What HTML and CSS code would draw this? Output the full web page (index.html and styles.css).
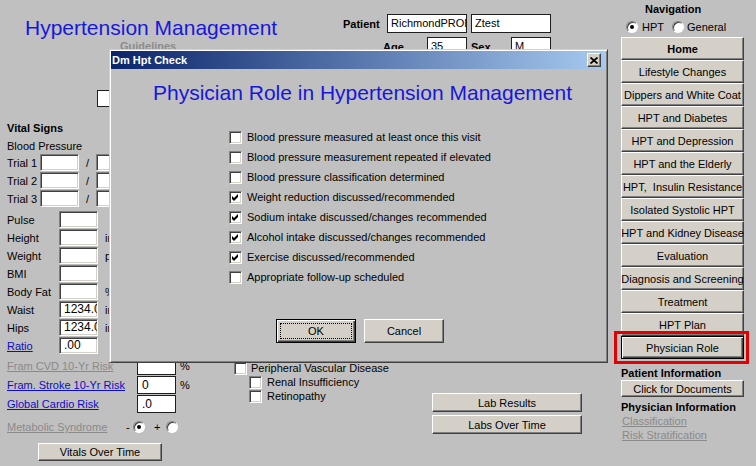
FILE: index.html
```html
<!DOCTYPE html>
<html lang="en">
<head>
<meta charset="utf-8">
<title>Hypertension Management</title>
<link rel="stylesheet" href="styles.css">
</head>
<body>
<div class="screen">
  <div class="main">
    <header class="top">
      <div class="titleblock">
        <h1 class="apptitle">Hypertension Management</h1>
        <div class="guide">Guidelines</div>
      </div>
      <div class="patient">
        <div class="prow">
          <span class="plabel">Patient</span>
          <span class="tbox w80">RichmondPROD</span>
          <span class="tbox w80 gapl">Ztest</span>
        </div>
        <div class="prow prow2">
          <span class="plabel">Age</span>
          <span class="tbox w40">35</span>
          <span class="plabel sex">Sex</span>
          <span class="tbox w40">M</span>
        </div>
      </div>
    </header>

    <section class="upper">
      <div class="searchbox"></div>
      <div class="sect bold">Vital Signs</div>
      <div class="sect sect2">Blood Pressure</div>
      <div class="trials">
        <div class="trow"><span class="tl">Trial 1</span><span class="field w39"></span><span class="slash">/</span><span class="field w39"></span></div>
        <div class="trow"><span class="tl">Trial 2</span><span class="field w39"></span><span class="slash">/</span><span class="field w39"></span></div>
        <div class="trow"><span class="tl">Trial 3</span><span class="field w39"></span><span class="slash">/</span><span class="field w39"></span></div>
      </div>
      <div class="vrows">
        <div class="vrow"><span class="vl">Pulse</span><span class="field w39"></span></div>
        <div class="vrow"><span class="vl">Height</span><span class="field w39"></span><span class="unit">in</span></div>
        <div class="vrow"><span class="vl">Weight</span><span class="field w39"></span><span class="unit">pounds</span></div>
        <div class="vrow"><span class="vl">BMI</span><span class="field w39"></span></div>
        <div class="vrow"><span class="vl">Body Fat</span><span class="field w39"></span><span class="unit">%</span></div>
        <div class="vrow"><span class="vl">Waist</span><span class="field w39"><span class="clipval">1234.0</span></span><span class="unit">in</span></div>
        <div class="vrow"><span class="vl">Hips</span><span class="field w39"><span class="clipval">1234.0</span></span><span class="unit">in</span></div>
        <div class="vrow"><span class="vl link">Ratio</span><span class="field w39">.00</span></div>
      </div>
    </section>

    <section class="lower">
      <div class="risk">
        <div class="rrow"><span class="rl glink">Fram CVD 10-Yr Risk</span><span class="rbox"></span><span class="pct">%</span></div>
        <div class="rrow"><span class="rl link">Fram. Stroke 10-Yr Risk</span><span class="rbox">0</span><span class="pct">%</span></div>
        <div class="rrow"><span class="rl link">Global Cardio Risk</span><span class="rbox">.0</span></div>
        <div class="meta">
          <span class="metal glink">Metabolic Syndrome</span>
          <span class="sign">-</span><span class="rad on"></span>
          <span class="sign plus">+</span><span class="rad"></span>
        </div>
        <button type="button" class="wbtn vbtn">Vitals Over Time</button>
      </div>
      <div class="conditions">
        <div class="crow"><span class="cb"></span><span>Peripheral Vascular Disease</span></div>
        <div class="crow sub"><span class="cb"></span><span>Renal Insufficiency</span></div>
        <div class="crow sub"><span class="cb"></span><span>Retinopathy</span></div>
      </div>
      <div class="labs">
        <button type="button" class="wbtn lbtn">Lab Results</button>
        <button type="button" class="wbtn lbtn">Labs Over Time</button>
      </div>
    </section>
  </div>

  <aside class="nav">
    <div class="navtitle">Navigation</div>
    <div class="navradios">
      <span class="rad on"></span><span class="rtext">HPT</span>
      <span class="rad rgap"></span><span class="rtext">General</span>
    </div>
    <div class="navbtns">
      <button type="button" class="wbtn nbtn bold">Home</button>
      <button type="button" class="wbtn nbtn">Lifestyle Changes</button>
      <button type="button" class="wbtn nbtn">Dippers and White Coat</button>
      <button type="button" class="wbtn nbtn">HPT and Diabetes</button>
      <button type="button" class="wbtn nbtn">HPT and Depression</button>
      <button type="button" class="wbtn nbtn">HPT and the Elderly</button>
      <button type="button" class="wbtn nbtn">HPT,&nbsp; Insulin Resistance</button>
      <button type="button" class="wbtn nbtn">Isolated Systolic HPT</button>
      <button type="button" class="wbtn nbtn">HPT and Kidney Disease</button>
      <button type="button" class="wbtn nbtn">Evaluation</button>
      <button type="button" class="wbtn nbtn">Diagnosis and Screening</button>
      <button type="button" class="wbtn nbtn">Treatment</button>
      <button type="button" class="wbtn nbtn">HPT Plan</button>
      <button type="button" class="wbtn nbtn defbtn">Physician Role</button>
    </div>
    <div class="ninfo">Patient Information</div>
    <button type="button" class="wbtn docbtn">Click for Documents</button>
    <div class="ninfo ninfo2">Physician Information</div>
    <div class="nlink glink">Classification</div>
    <div class="nlink glink">Risk Stratification</div>
  </aside>

  <div class="highlight"></div>

  <div class="dialog">
    <div class="titlebar">
      <span class="ttext">Dm Hpt Check</span>
      <span class="close"><svg width="8" height="7" viewBox="0 0 8 7"><path d="M0.5 0.5 L7.5 6.5 M7.5 0.5 L0.5 6.5" stroke="#000" stroke-width="1.7" fill="none"/></svg></span>
    </div>
    <h2 class="dhead">Physician Role in Hypertension Management</h2>
    <ul class="checklist">
      <li><span class="cb"></span><span>Blood pressure measured at least once this visit</span></li>
      <li><span class="cb"></span><span>Blood pressure measurement repeated if elevated</span></li>
      <li><span class="cb"></span><span>Blood pressure classification determined</span></li>
      <li><span class="cb"><svg width="9" height="9" viewBox="0 0 9 9"><polygon points="1,3 3,5 7,1 7,4 3,8 1,6" fill="#000"/></svg></span><span>Weight reduction discussed/recommended</span></li>
      <li><span class="cb"><svg width="9" height="9" viewBox="0 0 9 9"><polygon points="1,3 3,5 7,1 7,4 3,8 1,6" fill="#000"/></svg></span><span>Sodium intake discussed/changes recommended</span></li>
      <li><span class="cb"><svg width="9" height="9" viewBox="0 0 9 9"><polygon points="1,3 3,5 7,1 7,4 3,8 1,6" fill="#000"/></svg></span><span>Alcohol intake discussed/changes recommended</span></li>
      <li><span class="cb"><svg width="9" height="9" viewBox="0 0 9 9"><polygon points="1,3 3,5 7,1 7,4 3,8 1,6" fill="#000"/></svg></span><span>Exercise discussed/recommended</span></li>
      <li><span class="cb"></span><span>Appropriate follow-up scheduled</span></li>
    </ul>
    <div class="dbuttons">
      <button type="button" class="wbtn dbtn okbtn"><span class="focus">OK</span></button>
      <button type="button" class="wbtn dbtn">Cancel</button>
    </div>
  </div>
</div>
</body>
</html>
```

FILE: styles.css
```css
* { box-sizing: border-box; }
html, body { margin: 0; padding: 0; }
body {
  width: 756px;
  height: 466px;
  overflow: hidden;
  background: #c0c0c0;
  font-family: "Liberation Sans", Arial, sans-serif;
  font-size: 11px;
  color: #000;
}
.bold { font-weight: bold; }

.screen { position: relative; display: flex; width: 756px; height: 466px; }
.main { width: 614px; flex: none; }
.nav { width: 142px; flex: none; padding-left: 7px; }

/* header */
.top { display: flex; height: 50px; }
.titleblock { width: 343px; flex: none; padding-left: 25px; }
.apptitle {
  margin: 16px 0 0;
  font-size: 21px;
  line-height: 24px;
  font-weight: normal;
  color: #1717dc;
  white-space: nowrap;
}
.guide { margin-left: 95px; line-height: 13px; font-weight: bold; color: #8c8c8c; }

.patient { padding-top: 14px; }
.prow { display: flex; align-items: center; height: 19px; }
.prow2 { margin-top: 4px; padding-left: 40px; }
.plabel { width: 44px; flex: none; font-weight: bold; }
.plabel.sex { width: 40px; margin-left: 4px; }
.tbox {
  height: 19px;
  background: #fff;
  border: 1px solid #1e1e1e;
  padding: 0 3px;
  line-height: 17px;
  overflow: hidden;
  white-space: nowrap;
  flex: none;
}
.w80 { width: 80px; }
.w40 { width: 40px; }
.gapl { margin-left: 4px; }

/* vitals */
.upper { padding-top: 40px; }
.searchbox {
  margin-left: 97px;
  width: 60px;
  height: 17px;
  background: #fff;
  border: 1px solid #1e1e1e;
}
.sect { margin: 14px 0 0 7px; line-height: 14px; }
.sect2 { margin-top: 4px; }
.trials { margin-top: 1px; }
.trow { display: flex; align-items: flex-start; height: 18px; padding-left: 7px; }
.trow .tl { width: 33px; line-height: 18px; }
.slash { width: 17px; text-align: center; line-height: 18px; }
.field {
  height: 17px;
  flex: none;
  background: #fff;
  border: 1px solid;
  border-color: #808080 #ffffff #ffffff #808080;
  box-shadow: inset 1px 1px #404040, inset -1px -1px #d4d0c8;
  padding-left: 4px;
  line-height: 15px;
  font-size: 12px;
  overflow: hidden;
  white-space: nowrap;
}
.clipval { display: block; width: 33px; overflow: hidden; }
.w39 { width: 39px; }
.vrows { margin-top: 3px; }
.vrow { display: flex; align-items: flex-start; height: 18px; padding-left: 7px; }
.vl { width: 52px; line-height: 18px; }
.unit { margin-left: 7px; line-height: 18px; }

.link { color: #0c0cc4; text-decoration: underline; }
.glink { color: #8a8a8a; text-decoration: underline; }

/* lower */
.lower { display: flex; }
.risk { width: 230px; flex: none; padding-top: 2px; }
.rrow { display: flex; align-items: flex-start; height: 19px; padding-left: 7px; }
.rl { width: 130px; line-height: 18px; white-space: nowrap; }
.rbox {
  width: 39px;
  height: 18px;
  background: #fff;
  border: 1px solid #1e1e1e;
  padding-left: 4px;
  line-height: 16px;
  font-size: 12px;
}
.pct { margin-left: 4px; line-height: 18px; }
.meta { display: flex; align-items: center; height: 14px; margin-top: 6px; padding-left: 7px; }
.metal { width: 119px; }
.sign { width: 7px; }
.sign.plus { width: 8px; margin-left: 9px; text-align: left; }
.sign.plus + .rad { margin-left: 4px; }

.rad {
  width: 12px;
  height: 12px;
  flex: none;
  border-radius: 50%;
  background: #fff;
  border: 1px solid;
  border-color: #808080 #ffffff #ffffff #808080;
  box-shadow: inset 1px 1px #404040;
  display: flex;
  align-items: center;
  justify-content: center;
}
.rad.on::after {
  content: "";
  width: 4px;
  height: 4px;
  border-radius: 50%;
  background: #000;
}

.wbtn {
  display: flex;
  align-items: center;
  justify-content: center;
  margin: 0;
  padding: 0;
  background: #d4d0c8;
  border: 1px solid;
  border-color: #ffffff #404040 #404040 #ffffff;
  box-shadow: inset -1px -1px #808080;
  font-family: "Liberation Sans", Arial, sans-serif;
  font-size: 11px;
  color: #000;
  white-space: nowrap;
}
.vbtn { margin: 9px 0 0 38px; width: 124px; height: 18px; }

.conditions { width: 202px; flex: none; padding-top: 6px; }
.crow { display: flex; align-items: center; gap: 4px; height: 14px; padding-left: 4px; white-space: nowrap; }
.crow.sub { padding-left: 19px; gap: 5px; }

.cb {
  width: 13px;
  height: 13px;
  flex: none;
  background: #fff;
  border: 1px solid;
  border-color: #808080 #ffffff #ffffff #808080;
  box-shadow: inset 1px 1px #404040, inset -1px -1px #d4d0c8;
  display: flex;
  align-items: center;
  justify-content: center;
}
.cb svg { display: block; }

.labs { width: 150px; flex: none; padding-top: 38px; display: flex; flex-direction: column; gap: 3px; }
.lbtn { width: 150px; height: 19px; }

/* navigation */
.navtitle { padding: 2px 0 0 24px; line-height: 14px; font-weight: bold; }
.navradios { display: flex; align-items: center; height: 14px; margin-top: 4px; padding-left: 5px; }
.rtext { margin-left: 4px; }
.rad.rgap { margin-left: 8px; }
.rad.rgap + .rtext { margin-left: 3px; }
.navbtns { margin-top: 3px; display: flex; flex-direction: column; }
.nbtn { width: 123px; height: 23px; }
.defbtn {
  border: 1px solid #000;
  box-shadow: inset 1px 1px #ffffff, inset -1px -1px #404040, inset -2px -2px #808080;
}
.ninfo { margin-top: 7px; line-height: 14px; font-weight: bold; }
.ninfo2 { margin-top: 3px; }
.docbtn { width: 123px; height: 17px; }
.nlink { line-height: 14px; padding-left: 1px; }

.highlight {
  position: absolute;
  left: 614px;
  top: 331px;
  width: 135px;
  height: 33px;
  border: 3px solid #e30000;
  pointer-events: none;
}

/* dialog */
.dialog {
  position: absolute;
  left: 109px;
  top: 49px;
  width: 499px;
  height: 314px;
  background: #c0c0c0;
  border: 1px solid;
  border-color: #d4d0c8 #404040 #404040 #d4d0c8;
  box-shadow: inset 1px 1px #ffffff, inset -1px -1px #808080;
  padding: 1px;
}
.titlebar {
  height: 18px;
  display: flex;
  align-items: center;
  justify-content: space-between;
  background: linear-gradient(to right, #0a246a, #a6caf0);
  color: #fff;
  font-weight: bold;
  padding-left: 1px;
}
.close {
  width: 14px;
  height: 14px;
  margin-right: 5px;
  background: #d4d0c8;
  border: 1px solid;
  border-color: #ffffff #404040 #404040 #ffffff;
  box-shadow: inset -1px -1px #808080;
  display: flex;
  align-items: center;
  justify-content: center;
}
.close svg { display: block; }
.dhead {
  margin: 12px 0 0;
  padding-left: 42px;
  font-size: 21px;
  line-height: 24px;
  font-weight: normal;
  color: #1717dc;
  white-space: nowrap;
}
.checklist { list-style: none; margin: 22px 0 0 118px; padding: 0; }
.checklist li { display: flex; align-items: center; gap: 5px; height: 20px; white-space: nowrap; }
.dbuttons { display: flex; gap: 8px; margin-top: 32px; padding-left: 165px; }
.dbtn { width: 80px; height: 24px; }
.okbtn {
  border: 1px solid #000;
  box-shadow: inset 1px 1px #ffffff, inset -1px -1px #404040, inset -2px -2px #808080;
  padding: 3px;
}
.focus {
  flex: 1;
  align-self: stretch;
  display: flex;
  align-items: center;
  justify-content: center;
  border: 1px dotted #000;
}
```
